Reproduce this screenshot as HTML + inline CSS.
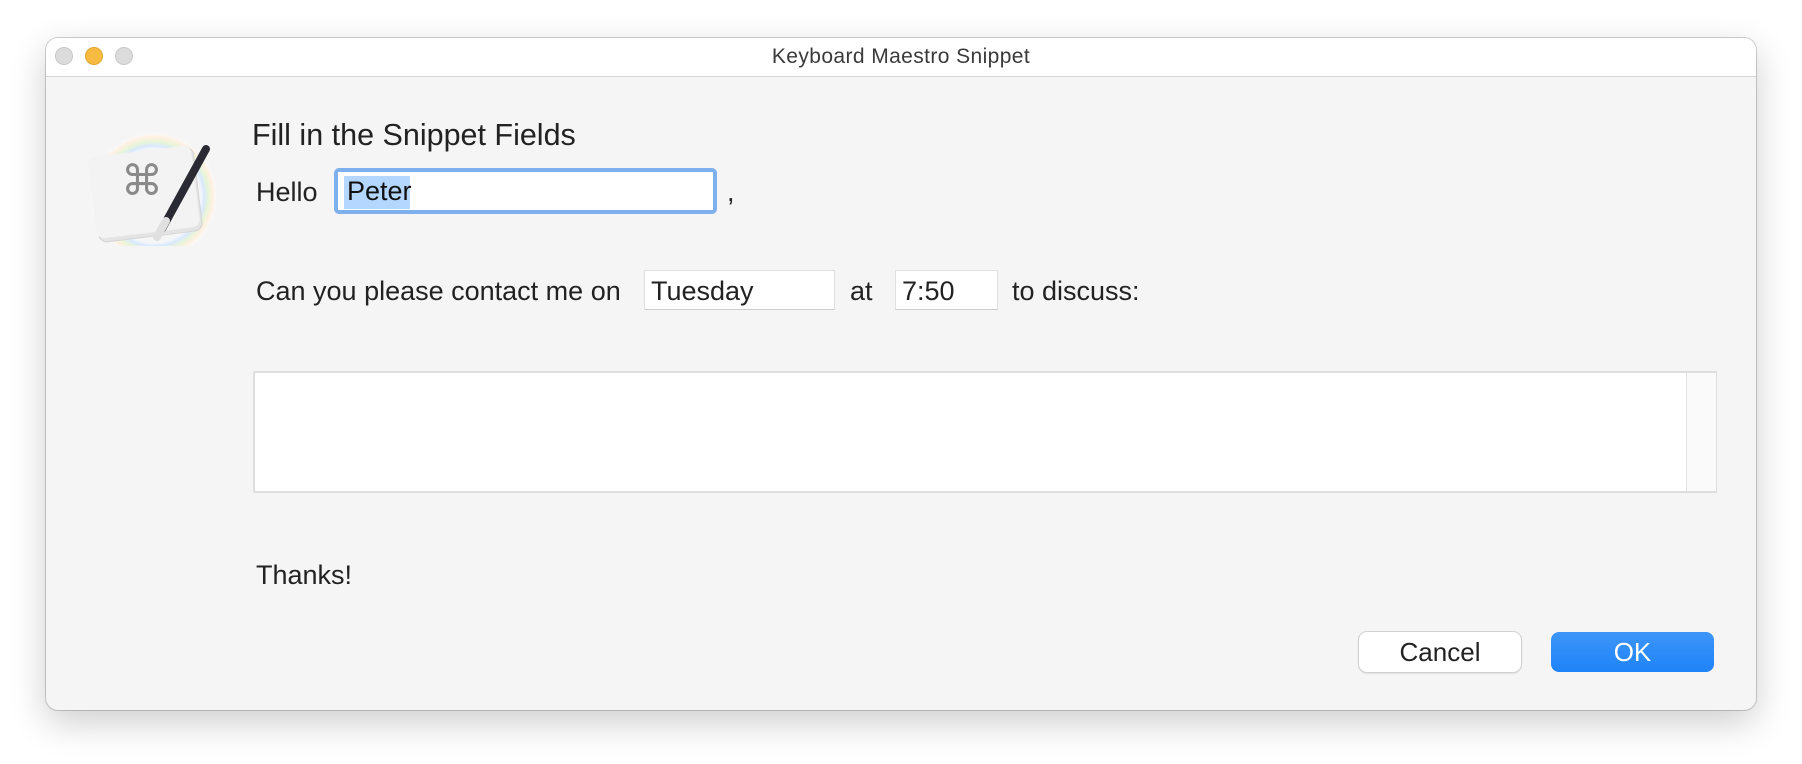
<!DOCTYPE html>
<html><head><meta charset="utf-8"><style>
body{margin:0;width:1802px;height:764px;background:#fff;position:relative;overflow:hidden;font-family:"Liberation Sans",sans-serif;color:#222}
.win{position:absolute;left:46px;top:38px;width:1710px;height:672px;border-radius:12px;background:#f5f5f5;box-shadow:0 0 0 1px rgba(0,0,0,.18),0 12px 36px rgba(0,0,0,.2);overflow:hidden}
.tb{position:absolute;left:0;top:0;right:0;height:38px;background:#fff;border-bottom:1px solid #d6d6d6}
.tl{position:absolute;top:9px;width:18px;height:18px;border-radius:50%;background:#dcdcdc;border:1px solid #c8c8c8;box-sizing:border-box}
.title{position:absolute;left:0;right:0;top:7px;text-align:center;font-size:21px;color:#3a3a3a;letter-spacing:0.4px}
.t{position:absolute;font-size:27px;white-space:nowrap;line-height:1}
.f{position:absolute;background:#fff;box-sizing:border-box;border:1px solid #e0e0e0;border-bottom-color:#ccc}
.btn{position:absolute;top:594px;height:40px;border-radius:8px;box-sizing:border-box;font-size:26px;text-align:center;line-height:40px}
</style></head><body>
<div class="win">
 <div class="tb">
  <div class="tl" style="left:9px"></div>
  <div class="tl" style="left:39px;background:#f6bb40;border-color:#e0a530"></div>
  <div class="tl" style="left:69px"></div>
  <div class="title">Keyboard Maestro Snippet</div>
 </div>
 <svg style="position:absolute;left:40px;top:73px" width="130" height="135" viewBox="0 0 130 135">
  <defs><radialGradient id="rb" cx="68" cy="85" r="64" gradientUnits="userSpaceOnUse">
   <stop offset="0.7" stop-color="#fff" stop-opacity="0"/><stop offset="0.78" stop-color="#d8e8ff"/><stop offset="0.85" stop-color="#e8f5d8"/><stop offset="0.92" stop-color="#fff0e0"/><stop offset="1" stop-color="#fff" stop-opacity="0"/></radialGradient></defs>
  <circle cx="68" cy="85" r="64" fill="url(#rb)"/>
  <g transform="rotate(-7 58 82)"><rect x="8" y="42" width="104" height="84" rx="8" fill="#e4e4e4" stroke="#d5d5d5"/><rect x="6" y="40" width="104" height="82" rx="8" fill="#f3f3f3"/></g>
  <text x="56" y="84" font-size="42" fill="#8a8a8a" text-anchor="middle" font-family="DejaVu Sans,sans-serif">⌘</text>
  <line x1="120" y1="38" x2="76" y2="118" stroke="#2a2a35" stroke-width="8" stroke-linecap="round"/>
  <line x1="80" y1="110" x2="71" y2="126" stroke="#e0e0e0" stroke-width="8" stroke-linecap="round"/>
 </svg>
 <div class="t" style="left:206px;top:82px;font-size:30.5px">Fill in the Snippet Fields</div>
 <div class="t" style="left:210px;top:141px">Hello</div>
 <div style="position:absolute;left:288px;top:130px;width:383px;height:46px;border-radius:5px;background:#7fb0ee"></div>
 <div style="position:absolute;left:292px;top:134px;width:375px;height:38px;background:#fff"></div>
 <div style="position:absolute;left:298px;top:138px;width:66px;height:33px;background:#b3d7ff"></div>
 <div class="t" style="left:301px;top:140px;color:#111">Peter</div>
 <div class="t" style="left:681px;top:141px">,</div>
 <div class="t" style="left:210px;top:240px">Can you please contact me on</div>
 <div class="f" style="left:598px;top:232px;width:191px;height:40px"></div>
 <div class="t" style="left:605px;top:240px">Tuesday</div>
 <div class="t" style="left:804px;top:240px">at</div>
 <div class="f" style="left:849px;top:232px;width:103px;height:40px"></div>
 <div class="t" style="left:856px;top:240px">7:50</div>
 <div class="t" style="left:966px;top:240px">to discuss:</div>
 <div style="position:absolute;left:207px;top:333px;width:1464px;height:122px;border:2px solid #dedede;box-sizing:border-box;background:#fff"></div>
 <div style="position:absolute;left:1640px;top:335px;width:29px;height:118px;border-left:1px solid #e2e2e2;background:#fafafa"></div>
 <div class="t" style="left:210px;top:524px">Thanks!</div>
 <div class="btn" style="left:1313px;width:162px;background:#fff;box-shadow:0 0 0 1px #d0d0d0,0 1px 2px rgba(0,0,0,.2)">Cancel</div>
 <div class="btn" style="left:1505px;width:163px;background:linear-gradient(#3d95f8,#1e83f8);color:#fff">OK</div>
</div>
</body></html>
